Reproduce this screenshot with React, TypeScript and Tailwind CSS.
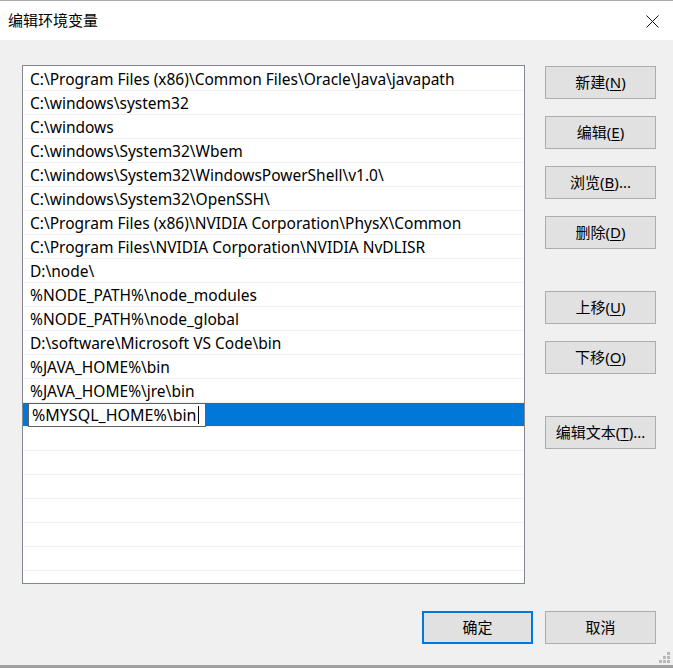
const paths = [
  "C:\\Program Files (x86)\\Common Files\\Oracle\\Java\\javapath",
  "C:\\windows\\system32",
  "C:\\windows",
  "C:\\windows\\System32\\Wbem",
  "C:\\windows\\System32\\WindowsPowerShell\\v1.0\\",
  "C:\\windows\\System32\\OpenSSH\\",
  "C:\\Program Files (x86)\\NVIDIA Corporation\\PhysX\\Common",
  "C:\\Program Files\\NVIDIA Corporation\\NVIDIA NvDLISR",
  "D:\\node\\",
  "%NODE_PATH%\\node_modules",
  "%NODE_PATH%\\node_global",
  "D:\\software\\Microsoft VS Code\\bin",
  "%JAVA_HOME%\\bin",
  "%JAVA_HOME%\\jre\\bin",
];

const font = { fontFamily: '"Noto Sans", "Noto Sans CJK SC", sans-serif' };

function Btn({ label, hot, rest = "", primary = false }: { label: string; hot: string; rest?: string; primary?: boolean }) {
  return (
    <button
      className={
        "flex h-[33px] w-[111px] items-center justify-center bg-[#e1e1e1] text-[15px] text-black " +
        (primary ? "border-2 border-[#0078d7]" : "border border-[#adadad]")
      }
    >
      {label}
      {hot && (
        <span>
          (<span className="underline underline-offset-2">{hot}</span>){rest}
        </span>
      )}
    </button>
  );
}

export default function App() {
  return (
    <div className="flex h-[668px] w-[673px] flex-col bg-[#f0f0f0]" style={font}>
      <div className="flex h-[40px] items-center justify-between border-t border-[#aaaaaa] bg-white pl-2 pr-[14px]">
        <span className="text-[15px] text-black">编辑环境变量</span>
        <svg width="13" height="13" viewBox="0 0 13 13" className="mt-[2px]">
          <path d="M0.5 0.5 L12.5 12.5 M12.5 0.5 L0.5 12.5" stroke="#111" strokeWidth="1" />
        </svg>
      </div>

      <div className="flex flex-1 flex-col pl-[22px] pr-[17px] pt-[25px]">
        <div className="flex gap-[20px]">
          <div className="h-[519px] w-[503px] overflow-hidden border border-[#828790] bg-white pt-px">
            {paths.map((p) => (
              <div key={p} className="flex h-[24px] items-center whitespace-nowrap border-b border-[#f0f0f0] pl-[7px] pt-[2px] text-[15.5px] text-black">
                {p}
              </div>
            ))}
            <div className="flex h-[24px] items-center border-b border-[#f0f0f0] bg-[#0078d7] pl-[5px]">
              <div className="flex h-[24px] w-[178px] items-center whitespace-nowrap border border-[#5f5f5f] bg-white pl-[3px] pt-px text-[16px] text-black">
                %MYSQL_HOME%\bin
                <span className="ml-[1px] inline-block h-[18px] w-px bg-black" />
              </div>
            </div>
            {Array.from({ length: 7 }).map((_, i) => (
              <div key={i} className="h-[24px] border-b border-[#f0f0f0]" />
            ))}
          </div>

          <div className="flex flex-col pt-px">
            <div className="flex flex-col gap-[17px]">
              <Btn label="新建" hot="N" />
              <Btn label="编辑" hot="E" />
              <Btn label="浏览" hot="B" rest="..." />
              <Btn label="删除" hot="D" />
            </div>
            <div className="mt-[42px] flex flex-col gap-[17px]">
              <Btn label="上移" hot="U" />
              <Btn label="下移" hot="O" />
            </div>
            <div className="mt-[42px]">
              <Btn label="编辑文本" hot="T" rest="..." />
            </div>
          </div>
        </div>

        <div className="mt-[27px] flex justify-end gap-[12px]">
          <Btn label="确定" hot="" primary />
          <Btn label="取消" hot="" />
        </div>
      </div>

      <div className="relative h-[3px] bg-[#a0a0a0]">
        <svg width="12" height="12" viewBox="0 0 12 12" className="absolute bottom-[4px] right-[2px]">
          {[
            [8, 0],
            [8, 4],
            [4, 4],
            [8, 8],
            [4, 8],
            [0, 8],
          ].map(([x, y]) => (
            <rect key={`${x}-${y}`} x={x} y={y} width="3" height="3" fill="#b8b8b8" />
          ))}
        </svg>
      </div>
    </div>
  );
}
